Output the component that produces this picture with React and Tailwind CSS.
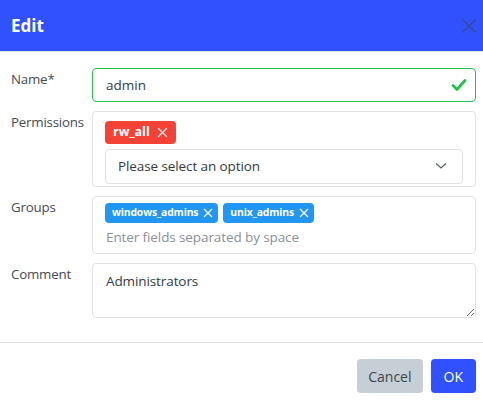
import React from "react";

function Tag({ label, color, big }) {
  return (
    <span
      className={`inline-flex items-center rounded-[4px] text-white font-bold ${color} ${
        big ? "h-[23px] px-[8px] text-[12.5px] gap-[7px]" : "h-[20px] pl-[7px] pr-[5px] text-[10.4px] gap-[5px] tracking-[-0.15px]"
      }`}
    >
      {label}
      <svg width={big ? 11 : 10} height={big ? 11 : 10} viewBox="0 0 10 10" className="shrink-0">
        <path d="M1 1L9 9M9 1L1 9" stroke="white" strokeWidth="1.2" fill="none" />
      </svg>
    </span>
  );
}

function Row({ label, children }) {
  return (
    <div className="flex">
      <div className="w-[81px] pt-[1px] text-[13.3px] text-[#444b55] leading-[20px] shrink-0 tracking-[-0.2px]">{label}</div>
      <div className="flex-1">{children}</div>
    </div>
  );
}

export default function App() {
  return (
    <div className="w-[483px] h-[402px] bg-white overflow-hidden" style={{ fontFamily: '"Open Sans", "Noto Sans", sans-serif' }}>
      <div className="h-[51px] bg-[#3151ff] flex items-center justify-between pl-[11px] pr-[6px] border-b border-[#dee2e6] box-content">
        <span className="text-white text-[17px] font-bold">Edit</span>
        <svg width="16" height="16" viewBox="0 0 16 16">
          <path d="M1.5 1.5L14.5 14.5M14.5 1.5L1.5 14.5" stroke="#3a4a8c" strokeWidth="1.4" fill="none" />
        </svg>
      </div>

      <div className="pt-[16px] pb-[24px] pl-[11px] pr-[7px] flex flex-col gap-[9px] border-b border-[#dee2e6]">
        <Row label="Name*">
          <div className="h-[34px] border border-[#22c24b] rounded-[4px] flex items-center justify-between pl-[13px] pr-[8px]">
            <span className="text-[13.5px] text-[#333a44]">admin</span>
            <svg width="16" height="14" viewBox="0 0 16 14">
              <path d="M2 7.5L6 11.5L14 2.5" stroke="#22c24b" strokeWidth="2.8" fill="none" strokeLinecap="round" strokeLinejoin="round" />
            </svg>
          </div>
        </Row>

        <Row label="Permissions">
          <div className="h-[76px] border border-[#dee2e6] rounded-[4px] pl-[12px] pr-[12px] pt-[6px]">
            <Tag label="rw_all" color="bg-[#f44336]" big />
            <div className="mt-[5px] h-[35px] border border-[#dee2e6] rounded-[4px] flex items-center justify-between pl-[12px] pr-[15px]">
              <span className="text-[13.5px] text-[#333a44] tracking-[-0.1px]">Please select an option</span>
              <svg width="12" height="8" viewBox="0 0 12 8">
                <path d="M1 1.5L6 6L11 1.5" stroke="#5a6270" strokeWidth="1.3" fill="none" />
              </svg>
            </div>
          </div>
        </Row>

        <Row label="Groups">
          <div className="h-[58px] border border-[#dee2e6] rounded-[4px] pl-[12px] pt-[6px]">
            <div className="flex gap-[5px]">
              <Tag label="windows_admins" color="bg-[#2196f3]" />
              <Tag label="unix_admins" color="bg-[#2196f3]" />
            </div>
            <div className="mt-[4px] pl-[1px] text-[13.5px] text-[#8a9099] tracking-[-0.1px]">Enter fields separated by space</div>
          </div>
        </Row>

        <Row label="Comment">
          <textarea
            readOnly
            defaultValue="Administrators"
            className="block w-full h-[55px] border border-[#dee2e6] rounded-[4px] px-[13px] py-[7px] text-[13.5px] text-[#333a44] outline-none tracking-[-0.1px]"
          />
        </Row>
      </div>

      <div className="flex justify-end gap-[8px] pt-[16px] pr-[7px]">
        <button className="h-[34px] px-[11px] rounded-[4px] bg-[#c6cfd5] text-[#3d4550] text-[14px]">Cancel</button>
        <button className="h-[34px] px-[13px] rounded-[4px] bg-[#3151ff] text-white text-[14px]">OK</button>
      </div>
    </div>
  );
}
